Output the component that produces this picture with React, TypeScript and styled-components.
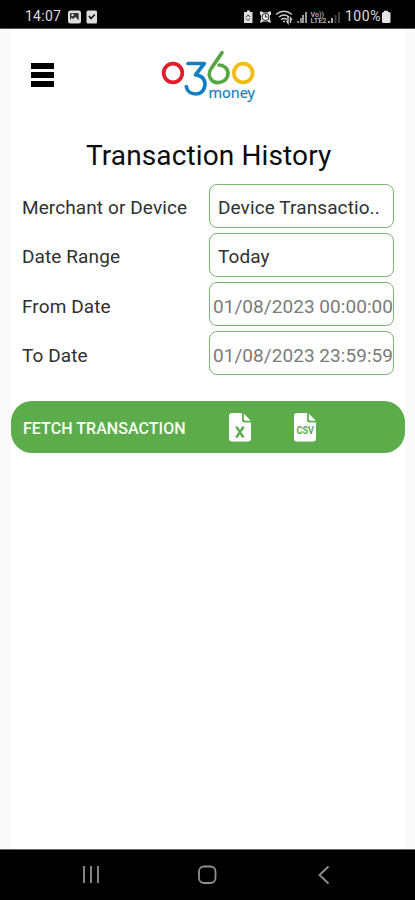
import React from "react";
import styled, { createGlobalStyle } from "styled-components";

const GlobalStyle = createGlobalStyle`
  * { box-sizing: border-box; }
  body { margin: 0; background: #fafafa; font-family: Roboto, "Liberation Sans", sans-serif; }
`;

const Screen = styled.div`
  width: 415px;
  height: 900px;
  display: flex;
  flex-direction: column;
  background: #fafafa;
  overflow: hidden;
`;

const StatusBar = styled.header`
  height: 29px;
  flex: none;
  display: flex;
  justify-content: space-between;
  padding: 3px 24px 0 25px;
  background: #000;
  border-bottom: 1px solid #555;
  color: #dedede;
`;

const StatusGroup = styled.div`
  height: 27px;
  display: flex;
  align-items: center;
`;

const StatusText = styled.span<{ $spacing: number }>`
  font-size: 14px;
  line-height: 27px;
  letter-spacing: ${(p) => p.$spacing}px;
`;

const StatusIcons = styled.svg`
  display: block;
  flex: none;
`;

const Page = styled.main`
  flex: 1;
  margin: 0 10px 0 11px;
  background: #fff;
`;

const TopBar = styled.div`
  height: 103px;
  display: flex;
  padding: 34px 0 0 20px;
`;

const MenuButton = styled.button`
  width: 23px;
  height: 24px;
  padding: 0;
  border: 0;
  background: none;
  display: flex;
  flex-direction: column;
  justify-content: space-between;
`;

const MenuLine = styled.span`
  width: 23px;
  height: 6px;
  background: #000;
`;

const Logo = styled.svg`
  display: block;
  margin: -14px 0 0 106px;
`;

const Title = styled.h1`
  margin: 0;
  padding-left: 75px;
  height: 52px;
  font-size: 28px;
  font-weight: 400;
  line-height: 48px;
  letter-spacing: 0.12px;
  white-space: nowrap;
  color: #0b0b0b;
`;

const Form = styled.form`
  display: grid;
  grid-template-columns: 187px 185px;
  grid-template-rows: repeat(4, 44px);
  row-gap: 5px;
  padding: 0 0 0 11px;
`;

const Label = styled.label<{ $muted?: boolean }>`
  font-size: 19px;
  font-weight: 400;
  line-height: ${(p) => (p.$muted ? 50 : 47)}px;
  letter-spacing: 0.1px;
  color: #303030;
  white-space: nowrap;
`;

const Field = styled.div<{ $muted?: boolean }>`
  height: 44px;
  border: 1px solid #7db575;
  border-radius: 8px;
  padding-left: ${(p) => (p.$muted ? 3 : 8)}px;
  font-size: 19px;
  font-weight: 400;
  line-height: ${(p) => (p.$muted ? 48 : 45)}px;
  letter-spacing: ${(p) => (p.$muted ? 0.05 : 0.1)}px;
  color: ${(p) => (p.$muted ? "#7b7b7b" : "#303030")};
  white-space: nowrap;
`;

const ActionBar = styled.div`
  width: 394px;
  height: 52px;
  margin-top: 26px;
  border-radius: 21px;
  background: #5dac4c;
  display: flex;
  align-items: center;
  padding-left: 12px;
`;

const FetchLabel = styled.button`
  width: 205px;
  padding: 3px 0 0;
  border: 0;
  background: none;
  text-align: left;
  font: 500 16px/20px Roboto, sans-serif;
  letter-spacing: 0.05px;
  color: #f8fff4;
  white-space: nowrap;
`;

const ExportButton = styled.button`
  width: 65px;
  height: 30px;
  padding: 0 0 0 1px;
  border: 0;
  background: none;
  display: flex;
  svg { display: block; }
`;

const NavBar = styled.nav`
  height: 51px;
  flex: none;
  background: #000;
  border-top: 1px solid #666;
  svg { display: block; }
`;

function FileIcon({ kind }: { kind: "X" | "CSV" }) {
  return (
    <svg width="23" height="30" viewBox="0 0 23 30">
      <path d="M3 1h10v7.200q0 2.300 2.300 2.300H22v16q0 3-3 3H3q-3 0-3-3v-22.500q0-3 3-3Z" fill="#fff" />
      <path d="M14.800 1.400 21.800 8.700h-5.300q-1.700 0-1.700-1.700Z" fill="#fff" />
      {kind === "X" ? (
        <path d="M7.300 14.700 14.400 25.500M14.600 14.700 7.200 25.500" stroke="#5dac4c" strokeWidth="2.400" />
      ) : (
        <text x="2.500" y="21.500" fontFamily="Roboto" fontSize="10.500" fontWeight="700" textLength="17.500" lengthAdjust="spacingAndGlyphs" fill="#5dac4c">CSV</text>
      )}
    </svg>
  );
}

const rows = [
  { label: "Merchant or Device", value: "Device Transactio..", muted: false },
  { label: "Date Range", value: "Today", muted: false },
  { label: "From Date", value: "01/08/2023 00:00:00", muted: true },
  { label: "To Date", value: "01/08/2023 23:59:59", muted: true },
];

export default function App() {
  return (
    <Screen>
      <GlobalStyle />
      <StatusBar>
        <StatusGroup>
          <StatusText $spacing={0.25}>14:07</StatusText>
          <StatusIcons width="36" height="14" viewBox="0 0 36 14">
            <rect x="7" y=".5" width="13" height="13" rx="2.500" fill="#ddd" />
            <path d="M9 10.500V4q0-1 1-1H16.500q1.200 0 1.200 1v6.500L14.500 7l-2.500 2L10.500 7.500Z" fill="#333" />
            <circle cx="11.500" cy="5" r="1.200" fill="#ddd" />
            <rect x="25.500" y=".5" width="10.500" height="13" rx="1.500" fill="#ddd" />
            <path d="m28 6 2 2.500 3.800-4" fill="none" stroke="#111" strokeWidth="1.600" />
          </StatusIcons>
        </StatusGroup>
        <StatusGroup>
          <StatusIcons width="102" height="16" viewBox="0 0 102 16">
            <path d="M2 3h2V1.500h3V3h2.500v11H1V3Z" fill="#ddd" />
            <path d="M3 8.200 5.200 6 7 8M7 9.500 5 11.500 3 9.500" fill="none" stroke="#333" />
            <path d="M17 2.500h2l1.500 1h4l1.500-1h2v3l-1 1v4l1 3h-2l-1-1h-5l-1 1h-2l1-3v-4l-1-1Z" fill="#ddd" />
            <circle cx="22.500" cy="8" r="3.500" fill="#eee" stroke="#222" />
            <path d="M22.500 5.800V8h2" fill="none" stroke="#222" />
            <g fill="none" stroke="#ccc" strokeWidth="1.400">
              <path d="M33 5.500Q41-1 49 5.500M36 8q5-4 10 0M38 10.500q3-2 6 0" />
              <path d="M40 12.500h2M45 8v6l-1.500-2M47.500 14V9l1.500 2" />
            </g>
            <path d="M54 12h2v2h-2ZM57 9h2v5h-2Z" fill="#888" />
            <path d="M59 6h2v8h-2ZM62 3h2v11h-2Z" fill="#999" />
            <g fill="#aaa" fontFamily="Roboto" fontWeight="700">
              <text x="67.500" y="7.500" fontSize="7.500" textLength="13.500" lengthAdjust="spacingAndGlyphs">Vo))</text>
              <text x="67.500" y="14" fontSize="7" textLength="16" lengthAdjust="spacingAndGlyphs">LTE2</text>
            </g>
            <path d="M85 12h2v2h-2ZM88 9h2v5h-2Z" fill="#aaa" />
            <path d="M91.500 6h2v8h-2ZM95 3h2v11h-2Z" fill="#444" />
          </StatusIcons>
          <StatusText $spacing={0.55}>100%</StatusText>
          <StatusIcons width="10" height="14" viewBox="0 0 10 14">
            <path d="M3 2V.8h4V2h1q1.500 0 1.500 1.500v8Q9.500 13 8 13H2.500Q1 13 1 11.500v-8Q1 2 2.500 2Z" fill="#e5e5e5" />
          </StatusIcons>
        </StatusGroup>
      </StatusBar>
      <Page>
        <TopBar>
          <MenuButton type="button" aria-label="Menu">
            <MenuLine /><MenuLine /><MenuLine />
          </MenuButton>
          <Logo width="98" height="56" viewBox="160 49 98 56" aria-label="0360 money">
            <g fill="none" strokeWidth="3.700" strokeLinecap="round" strokeLinejoin="round">
              <circle cx="173" cy="73" r="9.300" stroke="#df1e2b" />
              <path d="M188 63.500H204.300L195.500 74.800C201 75 205 79 205 84C205 90 201 94 195.700 94C190.500 94 187 91 186.300 86.500" stroke="#147fc0" />
              <path d="M222 52.700 211.500 68C208.500 72 209 76.500 210.800 79C212.500 81.500 215.500 83 219 82.500C224.500 82 228 78 228 73.500C228 68.800 224 65 219 65" stroke="#56a743" />
              <circle cx="243.200" cy="73" r="9.400" stroke="#f3bc12" />
            </g>
            <text x="208.500" y="97.500" fontFamily="Noto Sans" fontWeight="400" fontSize="14" textLength="46.500" lengthAdjust="spacingAndGlyphs" fill="#167fb9" stroke="#167fb9" strokeWidth=".2">money</text>
          </Logo>
        </TopBar>
        <Title>Transaction History</Title>
        <Form>
          {rows.map((r) => (
            <React.Fragment key={r.label}>
              <Label $muted={r.muted}>{r.label}</Label>
              <Field $muted={r.muted}>{r.value}</Field>
            </React.Fragment>
          ))}
        </Form>
        <ActionBar>
          <FetchLabel type="button">FETCH TRANSACTION</FetchLabel>
          <ExportButton type="button" aria-label="Excel export"><FileIcon kind="X" /></ExportButton>
          <ExportButton type="button" aria-label="CSV export"><FileIcon kind="CSV" /></ExportButton>
        </ActionBar>
      </Page>
      <NavBar>
        <svg width="415" height="50" viewBox="0 849 415 50" fill="none" stroke="#919191" strokeWidth="1.800">
          <path d="M84 865v17M91 865v17M98 865v17" />
          <rect x="199" y="865.500" width="16.500" height="16.500" rx="5" />
          <path d="m328.500 865.500-9 8.500 9 8.500" />
        </svg>
      </NavBar>
    </Screen>
  );
}
